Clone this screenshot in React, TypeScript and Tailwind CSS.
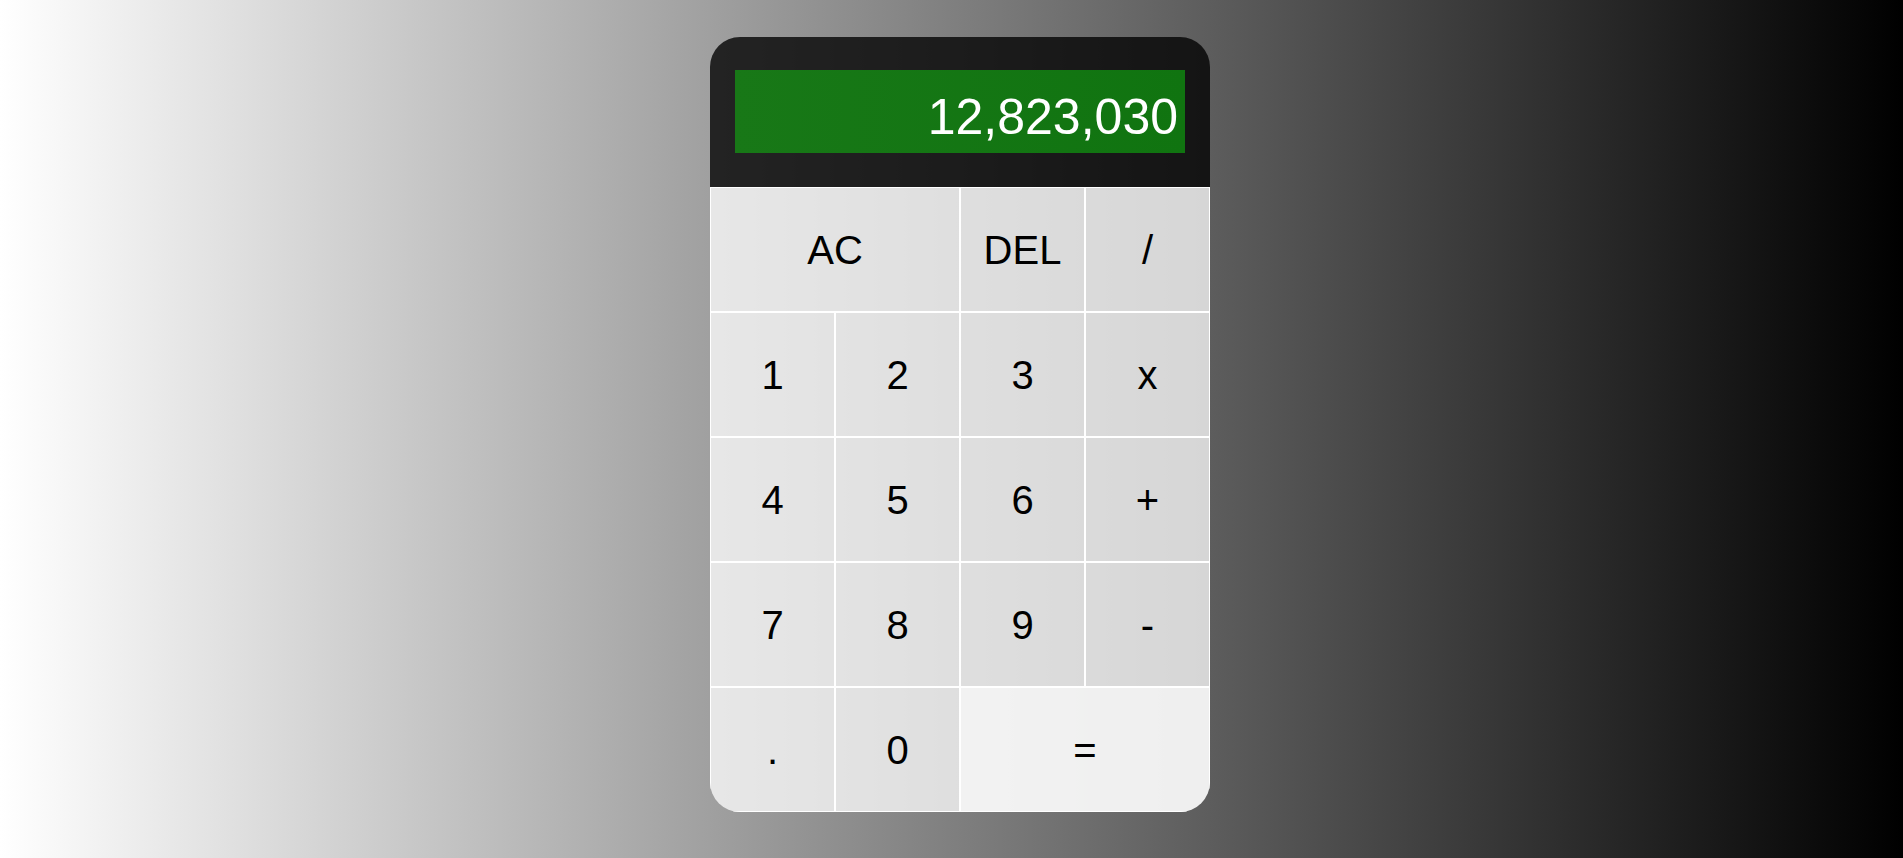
import React from "react";

const Btn = ({ label, span = false, light = false }: { label: string; span?: boolean; light?: boolean }) => (
  <button
    className={`${span ? "col-span-2" : ""} ${light ? "bg-white/90" : "bg-white/75"} border border-white flex items-center justify-center text-[40px] text-black cursor-pointer`}
    style={{ fontFamily: '"Liberation Sans", Arial, sans-serif' }}
  >
    {label}
  </button>
);

export default function App() {
  return (
    <div
      className="min-h-[858px] w-full bg-[linear-gradient(to_right,#ffffff,#000000)] flex justify-center items-start pt-[37px] pl-[17px]"
      style={{ fontFamily: '"Liberation Sans", Arial, sans-serif' }}
    >
      <div className="w-[500px] rounded-[30px] overflow-hidden flex flex-col">
        <div className="h-[150px] bg-black/[0.78] px-[25px] pt-[33px]">
          <div className="h-[83px] bg-[linear-gradient(to_right,#187817,#107410)] flex justify-end items-end pr-[7px] pb-[7px]">
            <span className="text-white text-[50px]" style={{ lineHeight: "normal" }}>
              12,823,030
            </span>
          </div>
        </div>
        <div className="grid grid-cols-[repeat(4,125px)] grid-rows-[repeat(5,125px)]">
          <Btn label="AC" span />
          <Btn label="DEL" />
          <Btn label="/" />
          <Btn label="1" />
          <Btn label="2" />
          <Btn label="3" />
          <Btn label="x" />
          <Btn label="4" />
          <Btn label="5" />
          <Btn label="6" />
          <Btn label="+" />
          <Btn label="7" />
          <Btn label="8" />
          <Btn label="9" />
          <Btn label="-" />
          <Btn label="." />
          <Btn label="0" />
          <Btn label="=" span light />
        </div>
      </div>
    </div>
  );
}
